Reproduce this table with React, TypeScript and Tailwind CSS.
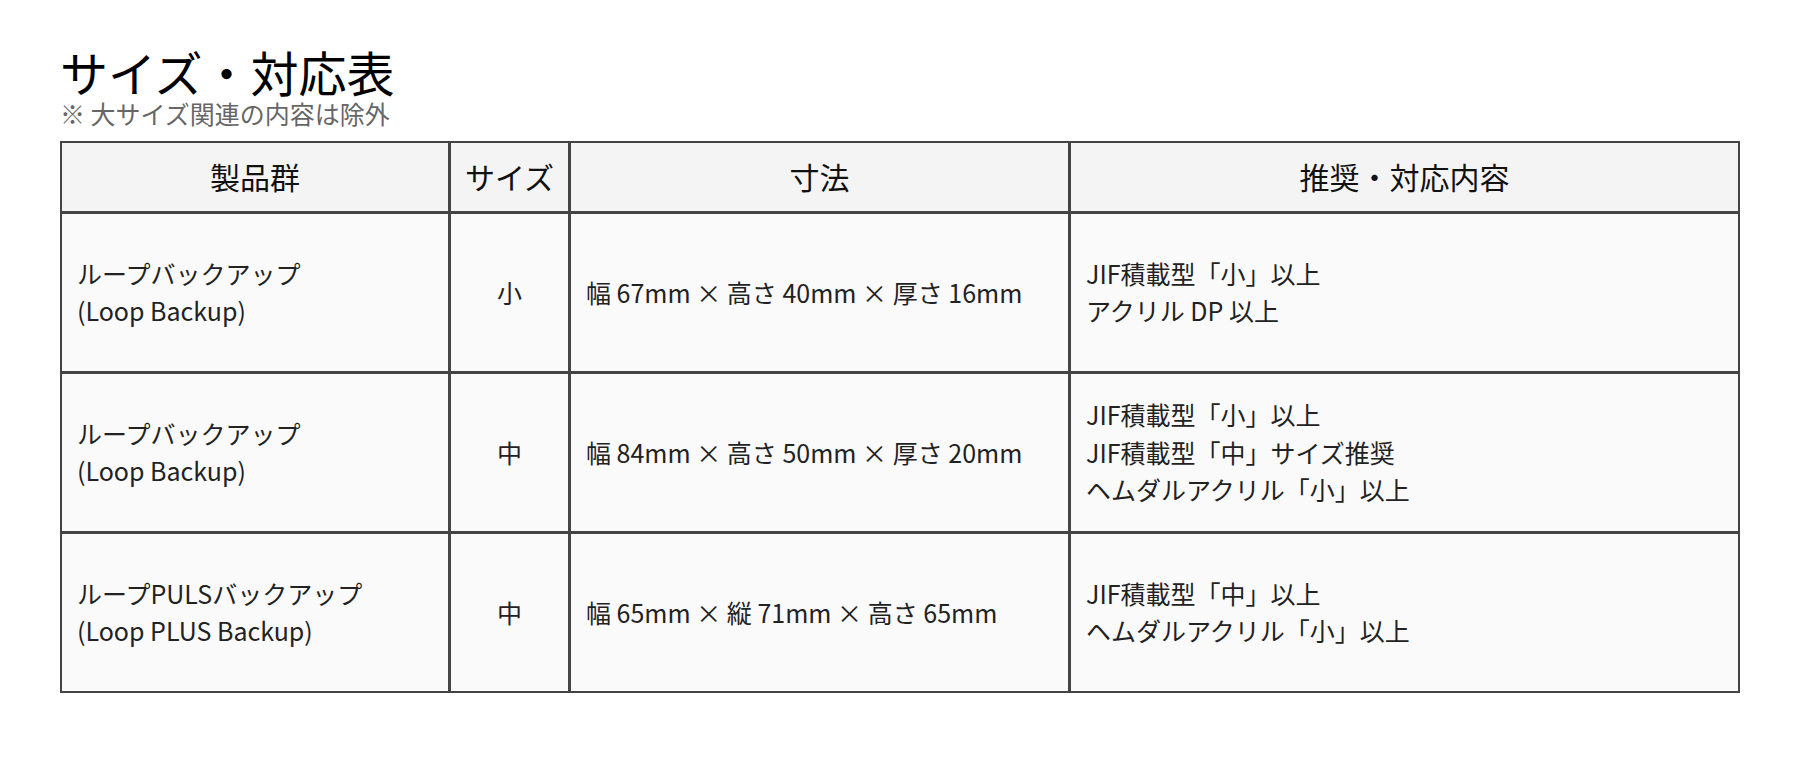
const rows = [
  {
    product: ['ループバックアップ', '(Loop Backup)'],
    size: '小',
    dims: '幅 67mm × 高さ 40mm × 厚さ 16mm',
    notes: ['JIF積載型「小」以上', 'アクリル DP 以上'],
  },
  {
    product: ['ループバックアップ', '(Loop Backup)'],
    size: '中',
    dims: '幅 84mm × 高さ 50mm × 厚さ 20mm',
    notes: ['JIF積載型「小」以上', 'JIF積載型「中」サイズ推奨', 'ヘムダルアクリル「小」以上'],
  },
  {
    product: ['ループPULSバックアップ', '(Loop PLUS Backup)'],
    size: '中',
    dims: '幅 65mm × 縦 71mm × 高さ 65mm',
    notes: ['JIF積載型「中」以上', 'ヘムダルアクリル「小」以上'],
  },
];

const headers = ['製品群', 'サイズ', '寸法', '推奨・対応内容'];

// inner grid lines are a little heavier than the outer frame
const side = 'border-r-[3px] border-[#444] last:border-r-0';

export default function App() {
  return (
    <div className="min-h-[760px] bg-white px-[60px] pt-[45px] font-['Noto_Sans_CJK_JP','Noto_Sans',sans-serif] text-[#222]">
      <h1 className="text-[48px] leading-[1.1] font-normal text-black">サイズ・対応表</h1>
      <p className="text-[25px] leading-[1.2] text-[#666]">※ 大サイズ関連の内容は除外</p>

      <table className="mt-[13px] w-full table-fixed border-separate border-spacing-0 border-2 border-[#444]">
        <colgroup>
          <col className="w-[389px]" />
          <col className="w-[120px]" />
          <col className="w-[500px]" />
          <col />
        </colgroup>
        <thead>
          <tr className="h-[71px] bg-[#f4f4f4]">
            {headers.map(h => (
              <th key={h} className={`${side} border-b-[3px] px-[10px] text-center text-[30px] leading-[1.5] font-normal text-[#111]`}>
                {h}
              </th>
            ))}
          </tr>
        </thead>
        <tbody>
          {rows.map((r, i) => {
            const last = i === rows.length - 1;
            const bottom = last ? '' : 'border-b-[3px]';
            return (
              <tr key={i} className={`${last ? 'h-[157px]' : 'h-[160px]'} bg-[#fafafa] text-[25px] leading-[1.5]`}>
                <td className={`${side} ${bottom} px-[15px] align-middle`}>
                  {r.product.map(p => <div key={p}>{p}</div>)}
                </td>
                <td className={`${side} ${bottom} px-[10px] text-center align-middle`}>{r.size}</td>
                <td className={`${side} ${bottom} px-[15px] align-middle`}>{r.dims}</td>
                <td className={`${side} ${bottom} px-[15px] align-middle`}>
                  {r.notes.map(n => <div key={n}>{n}</div>)}
                </td>
              </tr>
            );
          })}
        </tbody>
      </table>
    </div>
  );
}
